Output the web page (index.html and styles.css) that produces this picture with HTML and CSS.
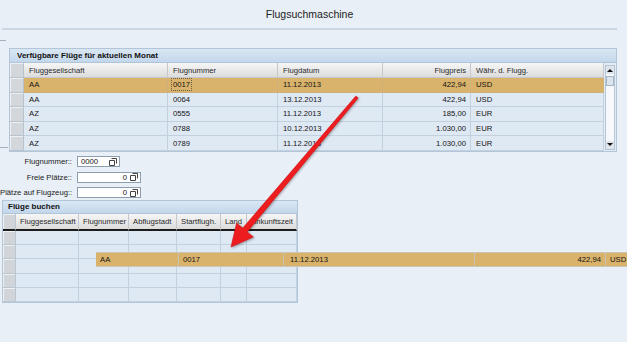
FILE: index.html
```html
<!DOCTYPE html>
<html lang="de">
<head>
  <meta charset="UTF-8">
  <title>Flugsuchmaschine</title>
  <link rel="stylesheet" href="styles.css">
</head>
<body>
  <h1 class="title">Flugsuchmaschine</h1>
  <span class="mark"></span>

  <div class="avail-row">
    <div class="gutter"><span class="mark"></span></div>
    <section class="panel avail">
      <div class="panel-title">Verfügbare Flüge für aktuellen Monat</div>
      <div class="grid-wrap">
        <div class="grid avail-grid">
          <div class="row">
            <div class="cell sel"></div>
            <div class="cell hd">Fluggesellschaft</div>
            <div class="cell hd">Flugnummer</div>
            <div class="cell hd">Flugdatum</div>
            <div class="cell hd num">Flugpreis</div>
            <div class="cell hd">Währ. d. Flugg.</div>
          </div>
          <div class="row picked">
            <div class="cell sel"></div>
            <div class="cell">AA</div>
            <div class="cell"><span class="focus">0017</span></div>
            <div class="cell">11.12.2013</div>
            <div class="cell num">422,94</div>
            <div class="cell">USD</div>
          </div>
          <div class="row">
            <div class="cell sel"></div>
            <div class="cell">AA</div>
            <div class="cell">0064</div>
            <div class="cell">13.12.2013</div>
            <div class="cell num">422,94</div>
            <div class="cell">USD</div>
          </div>
          <div class="row">
            <div class="cell sel"></div>
            <div class="cell">AZ</div>
            <div class="cell">0555</div>
            <div class="cell">11.12.2013</div>
            <div class="cell num">185,00</div>
            <div class="cell">EUR</div>
          </div>
          <div class="row">
            <div class="cell sel"></div>
            <div class="cell">AZ</div>
            <div class="cell">0788</div>
            <div class="cell">10.12.2013</div>
            <div class="cell num">1.030,00</div>
            <div class="cell">EUR</div>
          </div>
          <div class="row">
            <div class="cell sel"></div>
            <div class="cell">AZ</div>
            <div class="cell">0789</div>
            <div class="cell">11.12.2013</div>
            <div class="cell num">1.030,00</div>
            <div class="cell">EUR</div>
          </div>
        </div>
        <div class="vscroll">
          <div class="track">
            <div class="sbtn up"></div>
            <div class="thumb"></div>
            <div class="spacer"></div>
            <div class="sbtn down"></div>
          </div>
        </div>
      </div>
    </section>
  </div>

  <div class="fields">
    <label for="flugnr">Flugnummer::</label>
    <div class="field short" id="flugnr">
      <span class="val">0000</span>
      <svg class="copy" viewBox="0 0 8 8"><path d="M2.5 0.5h5v5M0.5 2.5h5v5h-5z" fill="none" stroke="#444" stroke-width="1"/></svg>
    </div>
    <label for="frei">Freie Plätze::</label>
    <div class="field long" id="frei">
      <span class="val">0</span>
      <svg class="copy" viewBox="0 0 8 8"><path d="M2.5 0.5h5v5M0.5 2.5h5v5h-5z" fill="none" stroke="#444" stroke-width="1"/></svg>
    </div>
    <label for="plaetze">Plätze auf Flugzeug::</label>
    <div class="field long" id="plaetze">
      <span class="val">0</span>
      <svg class="copy" viewBox="0 0 8 8"><path d="M2.5 0.5h5v5M0.5 2.5h5v5h-5z" fill="none" stroke="#444" stroke-width="1"/></svg>
    </div>
  </div>

  <section class="panel booking">
    <div class="panel-title">Flüge buchen</div>
    <div class="grid book-grid">
      <div class="row">
        <div class="cell sel bh"></div>
        <div class="cell hd bh">Fluggesellschaft</div>
        <div class="cell hd bh">Flugnummer</div>
        <div class="cell hd bh">Abflugstadt</div>
        <div class="cell hd bh">Startflugh.</div>
        <div class="cell hd bh">Land</div>
        <div class="cell hd bh">Ankunftszeit</div>
      </div>
      <div class="row"><div class="cell sel"></div><div class="cell"></div><div class="cell"></div><div class="cell"></div><div class="cell"></div><div class="cell"></div><div class="cell"></div></div>
      <div class="row"><div class="cell sel"></div><div class="cell"></div><div class="cell"></div><div class="cell"></div><div class="cell"></div><div class="cell"></div><div class="cell"></div></div>
      <div class="row"><div class="cell sel"></div><div class="cell"></div><div class="cell"></div><div class="cell"></div><div class="cell"></div><div class="cell"></div><div class="cell"></div></div>
      <div class="row"><div class="cell sel"></div><div class="cell"></div><div class="cell"></div><div class="cell"></div><div class="cell"></div><div class="cell"></div><div class="cell"></div></div>
      <div class="row"><div class="cell sel"></div><div class="cell"></div><div class="cell"></div><div class="cell"></div><div class="cell"></div><div class="cell"></div><div class="cell"></div></div>
    </div>
  </section>

  <!-- row being dragged into the booking table -->
  <div class="drag-row">
    <div class="dcell w1">AA</div>
    <div class="dcell w2">0017</div>
    <div class="dcell w3">11.12.2013</div>
    <div class="dcell w4 num">422,94</div>
    <div class="dcell w5">USD</div>
  </div>

  <svg class="arrow" width="627" height="342" viewBox="0 0 627 342">
    <polygon points="355.8,96.1 242.8,228.1 236.6,223.0 231,247 253.4,237.0 247.2,231.9 358.2,97.9" fill="#ec1c1f" stroke="#d01418" stroke-width="0.6" stroke-linejoin="round"/>
  </svg>
</body>
</html>
```

FILE: styles.css
```css
* {
  box-sizing: border-box;
}

html, body {
  margin: 0;
  overflow: hidden;
}

body {
  position: relative;
  width: 627px;
  height: 342px;
  background: #e8eff6;
  font-family: "Liberation Sans", Arial, sans-serif;
  font-size: 7.7px;
  color: #141414;
}

.title {
  margin: 0 10px 0 2px;
  height: 30px;
  border-bottom: 2px solid #c9d6e3;
  font-size: 10.5px;
  font-weight: normal;
  line-height: 28px;
  text-align: center;
  color: #222;
}

.mark {
  display: block;
  width: 6px;
  height: 1px;
  margin-top: 10px;
  background: #a3afbb;
}

.avail-row {
  display: flex;
  margin-top: 7px;
}

.gutter {
  width: 9px;
  display: flex;
  align-items: flex-end;
  padding-bottom: 4px;
}

.gutter .mark {
  width: 8px;
  margin: 0;
}

.panel {
  border: 1px solid #b3c6d9;
  background: #e3ecf5;
}

.avail {
  width: 608px;
}

.panel-title {
  height: 14px;
  line-height: 13px;
  padding-left: 7px;
  font-size: 8px;
  font-weight: bold;
  color: #111;
  background: linear-gradient(#dae7f4, #c3d7eb);
  border-bottom: 1px solid #b0c5d9;
}

.booking .panel-title {
  height: 13px;
  line-height: 12px;
  padding-left: 5px;
}

.grid-wrap {
  display: flex;
}

.grid {
  display: grid;
}

.avail-grid {
  grid-template-columns: 14px 144px 110px 105px 88px 133px;
  grid-template-rows: 15px;
  grid-auto-rows: 14.6px;
}

.row {
  display: contents;
}

.cell {
  display: flex;
  align-items: center;
  padding: 0 5px;
  white-space: nowrap;
  overflow: hidden;
  background: #dfe9f4;
  border-right: 1px solid #c3d1df;
  border-bottom: 1px solid #c3d1df;
}

.cell.hd {
  background: linear-gradient(#f6f6f6, #dcdcdc);
  border-color: #c4c8cc;
  color: #2a2a2a;
}

.cell.sel {
  padding: 0;
  background: #d3d7dc;
  border-color: #b9c3cd;
  box-shadow: inset 1px 1px 0 #eef1f4;
}

.num {
  justify-content: flex-end;
  padding-right: 4px;
}

.picked .cell:not(.sel) {
  background: #d9b36b;
  border-color: #cdb07a;
}

.focus {
  outline: 1px dotted #6d5f45;
  outline-offset: 1px;
}

.vscroll {
  width: 12px;
  padding: 2px 1px 1px 1px;
}

.track {
  height: 100%;
  display: flex;
  flex-direction: column;
  background: #f6f8fb;
  border: 1px solid #b5c5d5;
}

.sbtn {
  height: 8px;
  display: flex;
  align-items: center;
  justify-content: center;
  background: #dfe5ec;
}

.sbtn::before {
  content: "";
  border-left: 3px solid transparent;
  border-right: 3px solid transparent;
}

.up::before {
  border-bottom: 3px solid #111;
}

.down::before {
  border-top: 3px solid #111;
}

.thumb {
  height: 10px;
  margin-top: 2px;
  background: #dce5ee;
  border: 1px solid #a3b6ca;
}

.spacer {
  flex: 1;
}

.fields {
  display: grid;
  grid-template-columns: 72px auto;
  column-gap: 5px;
  row-gap: 4.5px;
  align-items: center;
  justify-content: start;
  margin-top: 4.5px;
}

.fields label {
  text-align: right;
  line-height: 11px;
  color: #1a1a1a;
  white-space: nowrap;
}

.field {
  height: 11px;
  display: flex;
  align-items: center;
  padding: 0 2px 0 3px;
  background: #fff;
  border: 1px solid #8c9eb0;
}

.field .val {
  flex: 1;
}

.short {
  width: 43px;
}

.long {
  width: 64px;
}

.long .val {
  text-align: right;
}

.copy {
  width: 8px;
  height: 8px;
  margin-left: 3px;
}

.booking {
  width: 296px;
  margin: 1.5px 0 0 2px;
}

.book-grid {
  grid-template-columns: 13px 63px 50px 48px 44px 26px 50px;
  grid-template-rows: 17px;
  grid-auto-rows: 14.2px;
}

.book-grid .cell {
  padding-left: 4px;
  border-color: #c2d1e0;
}

.book-grid .cell.sel {
  background: #d1d5da;
  border-color: #bcc6d0;
}

.book-grid .cell.bh {
  border-bottom: 2px solid #1c1c1c;
}

.book-grid .cell.hd {
  border-right-color: #c4c8cc;
}

.drag-row {
  position: absolute;
  left: 96px;
  top: 251.5px;
  height: 15.5px;
  display: flex;
  background: #d9b36b;
  border-top: 1px solid #cbc5b4;
  border-bottom: 1px solid #cbc5b4;
}

.dcell {
  display: flex;
  align-items: center;
  padding-left: 4px;
  border-right: 1px solid #c9c3b1;
  white-space: nowrap;
}

.w1 { width: 83px; }
.w2 { width: 105px; }
.w3 { width: 191px; padding-left: 6px; }
.w4 { width: 131px; }
.w5 { width: 40px; }

.arrow {
  position: absolute;
  left: 0;
  top: 0;
  pointer-events: none;
  filter: drop-shadow(1px 1.5px 1px rgba(0, 0, 0, 0.3));
}
```
